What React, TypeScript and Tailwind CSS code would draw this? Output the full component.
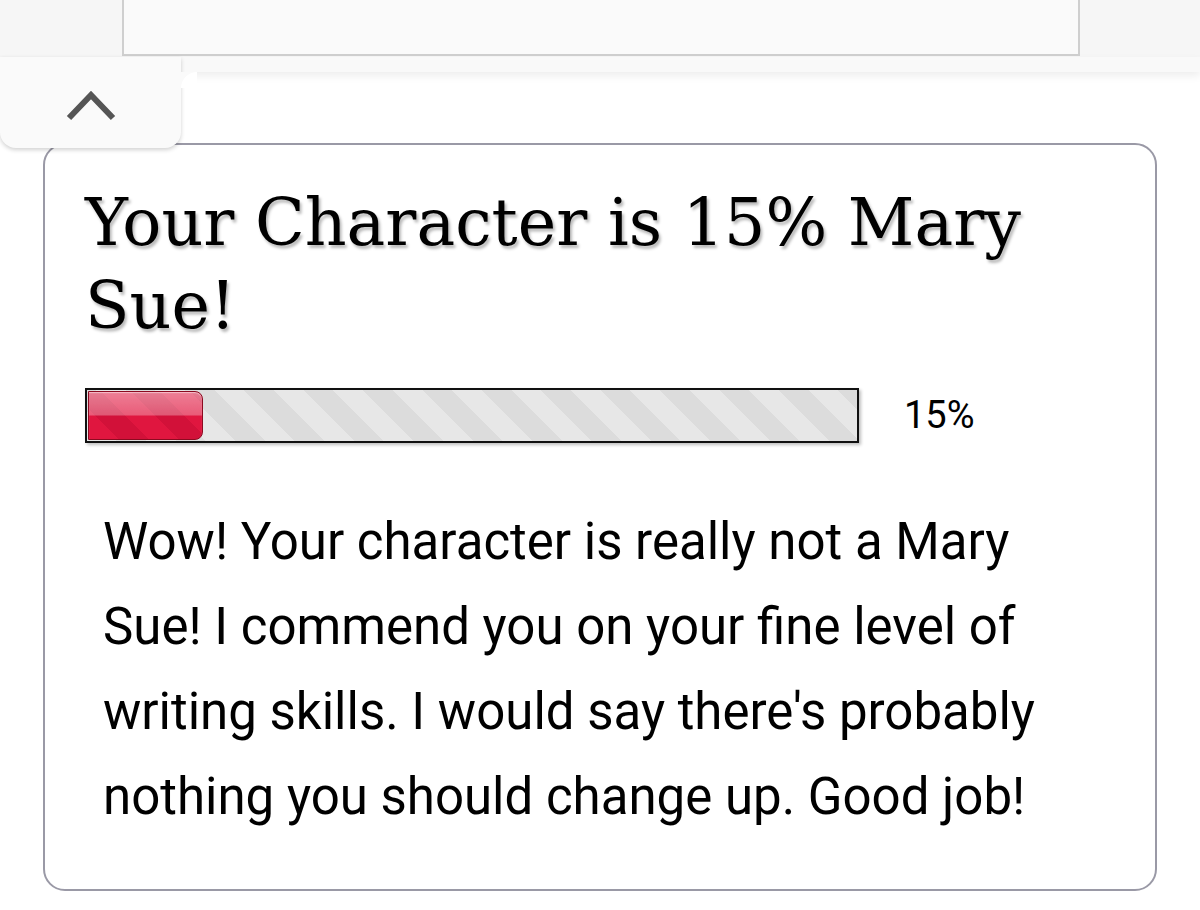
import React from 'react';

const score = 15;

// Glossy red fill for the progress bar
function Fill({ pct }: { pct: number }) {
  return (
    <div
      className="h-full rounded-r-[8px] border border-[#8c0a20] bg-[linear-gradient(180deg,rgba(255,255,255,0.45)_0%,rgba(255,255,255,0.3)_48%,rgba(255,255,255,0)_52%),repeating-linear-gradient(45deg,#e0163f_0px,#e0163f_21px,#d21139_21px,#d21139_42px)] shadow-[inset_0_1px_1px_rgba(255,255,255,0.5)]"
      style={{ width: `${pct}%` }}
    />
  );
}

export default function App() {
  const title = `Your Character is ${score}% Mary Sue!`;
  const label = `${score}%`;

  return (
    <div className="relative min-h-[910px] w-[1200px] overflow-hidden bg-white">
      {/* Top strip with the cut-off panel */}
      <div className="h-[57px] bg-[#f6f6f6]">
        <div className="ml-[122px] h-[56px] w-[958px] border-x-2 border-b-2 border-[#cfcfcf] bg-[#fafafa]" />
      </div>

      {/* Header bar */}
      <div className="relative z-10 h-[15px] bg-[#f9f9f9] shadow-[0_4px_8px_rgba(0,0,0,0.07)]" />

      {/* Collapse tab */}
      <div className="absolute left-0 top-[57px] z-20 flex h-[91px] w-[181px] items-center justify-center rounded-b-[16px] bg-[#fafafa] shadow-[0_2px_4px_rgba(0,0,0,0.18)]">
        <svg width="52" height="32" viewBox="0 0 52 32" className="mt-[6px]">
          <path d="M4 28 L26 5 L48 28" fill="none" stroke="#555" strokeWidth="6" strokeLinejoin="miter" />
        </svg>
        <div className="absolute right-[-16px] top-[15px] h-[16px] w-[16px] bg-[#fafafa]">
          <div className="h-full w-full rounded-tl-[16px] bg-white" />
        </div>
      </div>

      {/* Result card */}
      <div className="mx-[43px] mt-[71px] rounded-[22px] border-2 border-[#9a99a6] px-[40px] pb-[50px] pt-[36px]">
        <h1 className="font-['DejaVu_Serif',serif] text-[65px] leading-[83px] text-black [text-shadow:2px_3px_3px_rgba(0,0,0,0.28)]">
          {title}
        </h1>

        <div className="mt-[40px] flex items-center">
          <div className="h-[55px] w-[774px] border-2 border-[#111] bg-[repeating-linear-gradient(45deg,#e7e7e7_0px,#e7e7e7_21px,#dcdcdc_21px,#dcdcdc_42px)] p-px shadow-[2px_2px_3px_rgba(0,0,0,0.25)]">
            <Fill pct={score} />
          </div>
          <span className="ml-[45px] font-['Roboto',sans-serif] text-[38px] text-black">{label}</span>
        </div>

        <p className="mt-[55px] px-[18px] font-['Roboto',sans-serif] text-[51px] leading-[85px] text-black">
          Wow! Your character is really not a Mary Sue! I commend you on your fine level of writing skills. I would say there's probably nothing you should change up. Good job!
        </p>
      </div>
    </div>
  );
}
